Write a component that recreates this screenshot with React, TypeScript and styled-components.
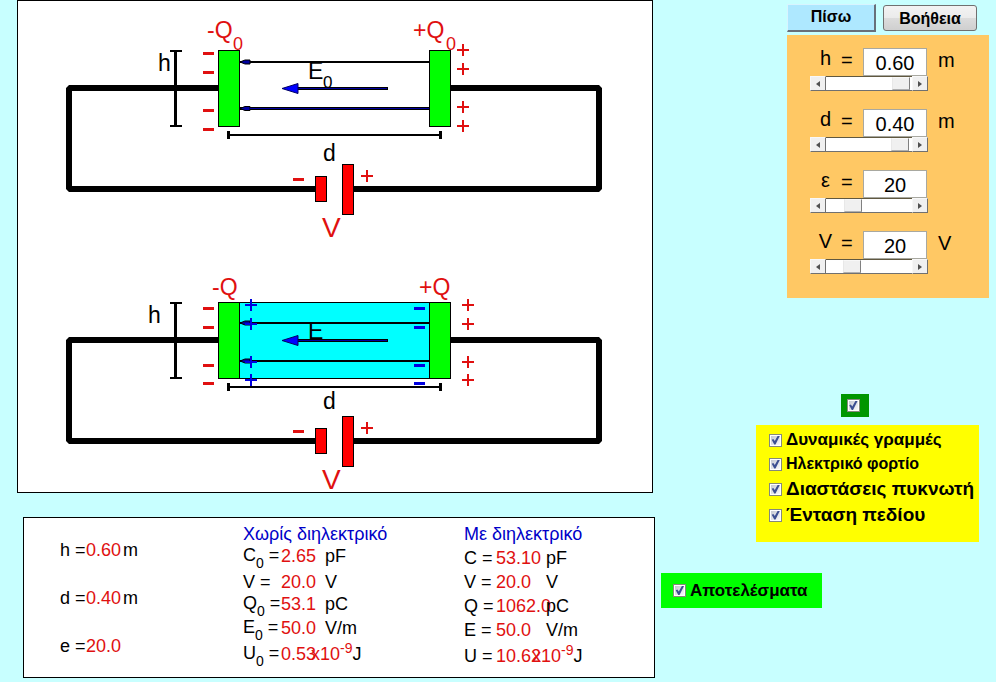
import { useState } from "react";
import type { ReactNode } from "react";
import styled, { createGlobalStyle } from "styled-components";

const GlobalStyle = createGlobalStyle`
  * { box-sizing: border-box; }
  body {
    margin: 0;
    background: #c8ffff;
    color: #000;
    font-family: "Liberation Sans", Arial, sans-serif;
  }
`;

const Page = styled.div`
  display: grid;
  grid-template-columns: 656fr 340fr;
`;

const MainColumn = styled.main`
  display: flex;
  flex-direction: column;
  gap: 24px;
  padding-bottom: 4px;
`;

const Diagram = styled.figure`
  margin: 0 3px 0 17px;
  border: 1px solid #000;
  background: #fff;

  svg {
    display: block;
    width: 100%;
    height: auto;
    overflow: visible;
  }
`;

const Results = styled.section`
  display: grid;
  grid-template-columns: 183fr 221fr 190fr;
  margin: 0 1px 0 23px;
  padding: 4px 0 7px 36px;
  border: 1px solid #000;
  background: #fff;
`;

const DataTable = styled.table<{ $rowHeight: number }>`
  align-self: start;
  border-collapse: collapse;
  table-layout: fixed;
  width: 144px;
  font-size: 18px;
  line-height: 24px;
  white-space: nowrap;

  &:not(:has(caption)) { margin-top: 4px; }

  caption {
    height: 24px;
    text-align: left;
    color: #0000c8;
  }

  th, td {
    height: ${(p) => p.$rowHeight}px;
    padding: 0;
    text-align: left;
    font-weight: 400;
    vertical-align: middle;
  }

  tr:has(sub) > td {
    padding-bottom: 4px;
    line-height: 20px;
  }

  tr:has(sub) > th {
    padding-bottom: 6px;
    line-height: 18px;
  }

  caption ~ tbody tr:last-child > * { height: 28px; }

  sub, sup {
    font-size: 14px;
    line-height: 0;
  }

  sub { vertical-align: -7px; }
  sup { vertical-align: 7px; }
`;

const NameCell = styled.th<{ $width: number }>`
  width: ${(p) => p.$width}px;
`;

const ValueCell = styled.td<{ $width: number }>`
  width: ${(p) => p.$width}px;
  color: #e01010;
`;

const Power = styled.span`
  margin-left: -14px;
  color: #e01010;
`;

const SideColumn = styled.aside`
  display: flex;
  flex-direction: column;
  align-items: flex-end;
  padding: 3px 7px 0 5px;
`;

const Toolbar = styled.nav`
  display: flex;
  align-items: center;
  gap: 7px;
  width: 202px;
  height: 29px;
  margin-bottom: 3px;
`;

const ActionButton = styled.button<{ $flat?: boolean }>`
  width: ${(p) => (p.$flat ? 89 : 94)}px;
  height: ${(p) => (p.$flat ? 28 : 26)}px;
  padding: ${(p) => (p.$flat ? 0 : "3px 0 0")};
  border: 1px solid;
  border-width: ${(p) => (p.$flat ? "1px 2px 2px 1px" : "1px")};
  border-color: ${(p) => (p.$flat ? "#d8f4ff #68707a #68707a #d8f4ff" : "#707070")};
  border-radius: ${(p) => (p.$flat ? 0 : 3)}px;
  background: ${(p) =>
    p.$flat ? "#aee8ff" : "linear-gradient(#f3f3f3 0 , #ebebeb 50%, #dcdcdc 51%, #cfcfcf)"};
  color: #000;
  font: bold 16px "Liberation Sans", Arial, sans-serif;
`;

const ControlPanel = styled.section`
  display: flex;
  flex-direction: column;
  gap: 18px;
  width: 202px;
  padding: 13px 30px 24px 23px;
  background: #ffc864;
`;

const Control = styled.div`
  display: flex;
  flex-direction: column;
  width: 118px;
`;

const ControlLine = styled.div`
  display: grid;
  grid-template-columns: 31px 22px 64px auto;
  align-items: center;
  height: 28px;
  font-size: 20px;
  line-height: 20px;
`;

const Symbol = styled.label`
  padding-bottom: 8px;
  text-align: center;
`;

const Unit = styled.span`
  padding: 0 0 5px 11px;
`;

const Equals = styled.span`
  padding-bottom: 4px;
`;

const NumberBox = styled.input`
  width: 64px;
  height: 28px;
  padding: 2px 0 0;
  border: 1px solid #a8a8a0;
  background: #fff;
  color: #000;
  text-align: center;
  font: 20px "Liberation Sans", Arial, sans-serif;
`;

const ScrollBar = styled.div`
  display: flex;
  height: 15px;
`;

const StepButton = styled.button`
  display: grid;
  place-items: center;
  width: 16px;
  height: 15px;
  padding: 0;
  border: 1px solid;
  border-color: #f8f8f8 #707070 #707070 #f8f8f8;
  background: #f0f0f0;
`;

const Track = styled.input`
  appearance: none;
  flex: 1;
  min-width: 0;
  height: 15px;
  margin: 0;
  border-top: 1px solid #605840;
  border-bottom: 1px solid #707070;
  background: #fff;

  &::-webkit-slider-thumb {
    appearance: none;
    width: 18px;
    height: 13px;
    border: 1px solid;
    border-color: #f8f8f8 #808080 #b0b0b0 #e8e8e8;
    background: #f0f0f0;
  }
`;

const CheckInput = styled.input`
  appearance: none;
  display: grid;
  place-items: center;
  flex: none;
  width: 13px;
  height: 13px;
  margin: 0;
  padding: 1px;
  border: 1px solid #85897c;
  background: linear-gradient(135deg, #c4c8d2, #fafafa) content-box, linear-gradient(#fff, #fff);

  &:checked::after {
    content: "";
    width: 9px;
    height: 9px;
    background: #3c4f92;
    clip-path: polygon(8% 48%, 26% 40%, 42% 62%, 76% 0, 100% 0, 50% 100%, 36% 100%);
  }
`;

const MasterToggle = styled.div`
  display: grid;
  place-items: center;
  align-self: center;
  width: 28px;
  height: 23px;
  margin: 96px 0 8px 60px;
  padding-right: 4px;
  background: #009600;
`;

const OptionPanel = styled.fieldset`
  display: flex;
  flex-direction: column;
  width: 223px;
  margin: 0 10px 31px 0;
  padding: 3px 0 14px 13px;
  border: 0;
  background: #ffff00;
`;

const Option = styled.label<{ $size: number }>`
  display: flex;
  align-items: center;
  gap: 4px;
  height: ${(p) => (p.$size > 17 ? 26 : 24)}px;
  font-size: ${(p) => p.$size}px;
  font-weight: 700;
  white-space: nowrap;
`;

const ResultsToggle = styled.div`
  align-self: flex-start;
  display: flex;
  align-items: center;
  width: 161px;
  height: 35px;
  padding-left: 12px;
  background: #00ff00;
`;

type Quantity = { name: ReactNode; value: string; unit?: ReactNode };

const settings: Quantity[] = [
  { name: "h =", value: "0.60", unit: "m" },
  { name: "d =", value: "0.40", unit: "m" },
  { name: "e =", value: "20.0" },
];

const joules = (
  <>
    <Power>x10<sup>-9</sup></Power>J
  </>
);

const withoutDielectric: Quantity[] = [
  { name: <>C<sub>0</sub> =</>, value: "2.65", unit: "pF" },
  { name: "V =", value: "20.0", unit: "V" },
  { name: <>Q<sub>0</sub> =</>, value: "53.1", unit: "pC" },
  { name: <>E<sub>0</sub> =</>, value: "50.0", unit: "V/m" },
  { name: <>U<sub>0</sub> =</>, value: "0.53", unit: joules },
];

const withDielectric: Quantity[] = [
  { name: "C =", value: "53.10", unit: "pF" },
  { name: "V =", value: "20.0", unit: "V" },
  { name: "Q =", value: "1062.0", unit: "pC" },
  { name: "E =", value: "50.0", unit: "V/m" },
  { name: "U =", value: "10.62", unit: joules },
];

type QuantityTableProps = {
  title?: string;
  rows: Quantity[];
  nameWidth: number;
  valueWidth: number;
  rowHeight?: number;
};

function QuantityTable({ title, rows, nameWidth, valueWidth, rowHeight = 24 }: QuantityTableProps) {
  return (
    <DataTable $rowHeight={rowHeight}>
      {title && <caption>{title}</caption>}
      <tbody>
        {rows.map((row, i) => (
          <tr key={i}>
            <NameCell scope="row" $width={nameWidth}>{row.name}</NameCell>
            <ValueCell $width={valueWidth}>{row.value}</ValueCell>
            <td>{row.unit}</td>
          </tr>
        ))}
      </tbody>
    </DataTable>
  );
}

const RED = "#e01010";
const BLUE = "#0000e0";

type GlyphProps = { x: number; y: number; color?: string };

function Plus({ x, y, color = RED }: GlyphProps) {
  return <path d={`M${x - 6} ${y}h12M${x} ${y - 6}v12`} stroke={color} strokeWidth="2" />;
}

function Minus({ x, y, color = RED }: GlyphProps) {
  return <path d={`M${x - 5} ${y}h11`} stroke={color} strokeWidth="3" />;
}

function FieldLine({ y, color = "#000", width = 2 }: { y: number; color?: string; width?: number }) {
  return (
    <g>
      <path d={`M240 ${y}H430`} stroke={color} strokeWidth={width} />
      <path d={`M240 ${y}l5 -2h5v4h-5z`} fill="#0000a0" stroke="#000" strokeWidth="1" />
    </g>
  );
}

function Circuit({ y, dielectric = false }: { y: number; dielectric?: boolean }) {
  const charges = dielectric ? [6, 25, 63, 81] : [0, 19, 57, 76];
  const top = y + 50;
  return (
    <g>
      <path
        d={`M218 ${y + 88}H69V${y + 189}H316M450 ${y + 88}H599V${y + 189}H353`}
        fill="none"
        stroke="#000"
        strokeWidth="6"
        strokeLinejoin="bevel"
      />
      {dielectric && (
        <rect x="239.5" y={top + 0.5} width="190" height="76" fill="#00ffff" stroke="#000" />
      )}
      <g stroke="#000" strokeWidth="1">
        <rect x="218.5" y={top + 0.5} width="21" height="76" fill="#00ff00" />
        <rect x="429.5" y={top + 0.5} width="21" height="76" fill="#00ff00" />
        <rect x="315.5" y={y + 176.5} width="11" height="25" fill="#ff0000" />
        <rect x="342.5" y={y + 164.5} width="11" height="50" fill="#ff0000" />
      </g>
      <FieldLine y={dielectric ? y + 71 : y + 62} />
      {dielectric ? (
        <FieldLine y={y + 109} />
      ) : (
        <g>
          <FieldLine y={y + 108.5} width={3} />
          <path d="M250 108.5H429" stroke="#0000a0" />
        </g>
      )}
      <text x="308" y={dielectric ? y + 87 : y + 79} fontSize="23">E</text>
      {!dielectric && <text x="323" y={y + 88} fontSize="17">0</text>}
      <path d={`M296 ${y + 88.5}H388`} stroke="#000" strokeWidth="3" />
      <path d={`M297 ${y + 88.5}H387`} stroke="#0000a0" strokeWidth="1" />
      <path d={`M282 ${y + 88.5}l16 -5v10z`} fill="#0000ff" stroke="#000060" strokeWidth="1" />

      <path d={`M175.5 ${top + 1}v75`} stroke="#000" strokeWidth="3" />
      <path d={`M170 ${top + 1}h12M170 ${top + 76}h12`} stroke="#000" strokeWidth="2" />
      <path d={`M228 ${y + 135}H441`} stroke="#000" strokeWidth="2" />
      <path d={`M228.5 ${y + 131}v8M440.5 ${y + 131}v8`} stroke="#000" strokeWidth="3" />

      <text x={dielectric ? 148 : 158} y={y + 71} fontSize="23">h</text>
      <text x="323" y={dielectric ? y + 157 : y + 161} fontSize="23">d</text>
      <g fill={RED}>
        <text x="322" y={y + 237} fontSize="28">V</text>
        {dielectric ? (
          <g fontSize="23">
            <text x="212" y={y + 43}>-Q</text>
            <text x="419" y={y + 43}>+Q</text>
          </g>
        ) : (
          <g fontSize="23">
            <text x="207" y={y + 38}>-Q</text>
            <text x="233" y={y + 50} fontSize="18">0</text>
            <text x="413" y={y + 38}>+Q</text>
            <text x="446" y={y + 50} fontSize="18">0</text>
          </g>
        )}
      </g>
      <Minus x={298} y={y + 179.5} />
      <Plus x={367} y={y + 176} />
      {charges.map((offset) => (
        <g key={offset}>
          <Minus x={208} y={top + offset + (dielectric ? 0.5 : 3.5)} />
          <Plus x={dielectric ? 468 : 463} y={top + offset - (dielectric ? 3 : 0)} />
          {dielectric && (
            <>
              <Plus x={251} y={top + offset - 3} color={BLUE} />
              <Minus x={419} y={top + offset + 0.5} color={BLUE} />
            </>
          )}
        </g>
      ))}
    </g>
  );
}

type Parameter = {
  id: string;
  symbol: string;
  unit?: string;
  initial: number;
  max: number;
  step: number;
  digits: number;
};

const parameters: Parameter[] = [
  { id: "height", symbol: "h", unit: "m", initial: 0.6, max: 0.62, step: 0.01, digits: 2 },
  { id: "distance", symbol: "d", unit: "m", initial: 0.4, max: 0.42, step: 0.01, digits: 2 },
  { id: "permittivity", symbol: "ε", initial: 20, max: 77, step: 1, digits: 0 },
  { id: "voltage", symbol: "V", unit: "V", initial: 20, max: 80, step: 1, digits: 0 },
];

function ParameterControl({ id, symbol, unit, initial, max, step, digits }: Parameter) {
  const [value, setValue] = useState(initial);
  const change = (next: number) => {
    if (!Number.isNaN(next)) setValue(Math.min(max, Math.max(0, next)));
  };
  return (
    <Control>
      <ControlLine>
        <Symbol htmlFor={id}>{symbol}</Symbol>
        <Equals>=</Equals>
        <NumberBox id={id} value={value.toFixed(digits)} onChange={(e) => change(Number(e.target.value))} />
        <Unit>{unit}</Unit>
      </ControlLine>
      <ScrollBar>
        <StepButton type="button" aria-label={`${symbol} −`} onClick={() => change(value - step)}>
          <svg width="4" height="6"><path d="M4 0v6L0 3z" fill="#505050" /></svg>
        </StepButton>
        <Track
          type="range"
          aria-label={symbol}
          min={0}
          max={max}
          step={step}
          value={value}
          onChange={(e) => change(Number(e.target.value))}
        />
        <StepButton type="button" aria-label={`${symbol} +`} onClick={() => change(value + step)}>
          <svg width="4" height="6"><path d="M0 0v6l4-3z" fill="#505050" /></svg>
        </StepButton>
      </ScrollBar>
    </Control>
  );
}

function CheckOption({ label, size }: { label: string; size: number }) {
  return (
    <Option $size={size}>
      <CheckInput type="checkbox" defaultChecked />
      {label}
    </Option>
  );
}

export default function App() {
  return (
    <Page>
      <GlobalStyle />
      <MainColumn>
        <Diagram>
          <svg viewBox="18 1 634 491">
            <Circuit y={0} />
            <Circuit y={252} dielectric />
          </svg>
        </Diagram>
        <Results>
          <QuantityTable rows={settings} nameWidth={26} valueWidth={37} rowHeight={48} />
          <QuantityTable title="Χωρίς διηλεκτρικό" rows={withoutDielectric} nameWidth={38} valueWidth={44} />
          <QuantityTable title="Με διηλεκτρικό" rows={withDielectric} nameWidth={32} valueWidth={50} />
        </Results>
      </MainColumn>
      <SideColumn>
        <Toolbar>
          <ActionButton type="button" $flat>Πίσω</ActionButton>
          <ActionButton type="button">Βοήθεια</ActionButton>
        </Toolbar>
        <ControlPanel>
          {parameters.map((parameter) => (
            <ParameterControl key={parameter.id} {...parameter} />
          ))}
        </ControlPanel>
        <MasterToggle>
          <CheckInput type="checkbox" aria-label="Όλα" defaultChecked />
        </MasterToggle>
        <OptionPanel>
          <CheckOption label="Δυναμικές γραμμές" size={17} />
          <CheckOption label="Ηλεκτρικό φορτίο" size={16} />
          <CheckOption label="Διαστάσεις πυκνωτή" size={19} />
          <CheckOption label="Ένταση πεδίου" size={19} />
        </OptionPanel>
        <ResultsToggle>
          <CheckOption label="Αποτελέσματα" size={17} />
        </ResultsToggle>
      </SideColumn>
    </Page>
  );
}
